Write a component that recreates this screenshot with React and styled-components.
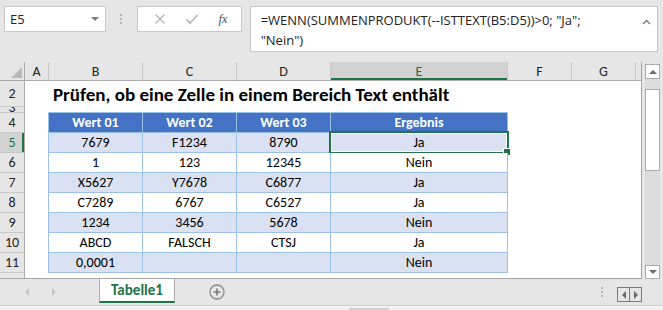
import React from 'react';
import styled, { createGlobalStyle, css } from 'styled-components';

const GREEN = '#217346';
const CELLFONT = '"Carlito", "Lato", "Liberation Sans", sans-serif';
const UIFONT = '"Segoe UI", "Open Sans", "Noto Sans", sans-serif';

const Global = createGlobalStyle`
  html, body { margin: 0; padding: 0; }
  body {
    width: 663px; height: 310px; overflow: hidden;
    background: #e6e6e6;
    font-family: ${UIFONT};
  }
  * { box-sizing: border-box; }
`;

const Window = styled.div`
  width: 663px;
  height: 310px;
  display: flex;
  flex-direction: column;
  background: #e6e6e6;
  overflow: hidden;
`;

/* ---------- formula bar ---------- */
const FormulaBar = styled.div`
  height: 62px;
  flex: none;
  display: flex;
  align-items: flex-start;
  padding: 6px 5px 0 4px;
`;

const NameBox = styled.div`
  width: 102px;
  height: 26px;
  background: #fff;
  border: 1px solid #c6c6c6;
  display: flex;
  align-items: center;
  justify-content: space-between;
  padding: 0 6px 0 5px;
  font-size: 13px;
  color: #222;
`;

const DropTri = styled.span`
  width: 0; height: 0;
  border-left: 4px solid transparent;
  border-right: 4px solid transparent;
  border-top: 4px solid #7a7a7a;
`;

const DotsCol = styled.div`
  width: 31px;
  height: 26px;
  display: flex;
  flex-direction: column;
  align-items: center;
  justify-content: center;
  gap: 2px;
`;

const Dot = styled.span`
  width: 2px; height: 2px;
  background: #b4b4b4;
`;

const FxBox = styled.div`
  width: 105px;
  height: 26px;
  background: #fff;
  border: 1px solid #c6c6c6;
  display: flex;
  align-items: center;
  justify-content: space-around;
  padding: 0 4px 0 6px;
  margin-right: 8px;
`;

const FxIcon = styled.span`
  font-family: "Liberation Serif", serif;
  font-style: italic;
  font-size: 13px;
  color: #555;
  letter-spacing: -0.5px;
`;

const FormulaBox = styled.div`
  width: 409px;
  height: 46px;
  background: #fff;
  border: 1px solid #c6c6c6;
  display: flex;
  justify-content: space-between;
  padding: 3px 6px 0 10px;
`;

const FormulaText = styled.div`
  font-size: 13px;
  line-height: 20px;
  color: #222;
  white-space: pre;
`;

/* ---------- sheet ---------- */
const SheetRow = styled.div`
  display: flex;
  height: 217px;
  flex: none;
`;

const Sheet = styled.div`
  width: 642px;
  display: flex;
  flex-direction: column;
  border-right: 1px solid #a6a6a6;
  border-bottom: 1px solid #a6a6a6;
  overflow: hidden;
`;

const ColHeadRow = styled.div`
  display: flex;
  height: 19px;
  flex: none;
  border-bottom: 1px solid #ababab;
`;

const Corner = styled.div`
  width: 25px;
  flex: none;
  position: relative;
  border-right: 1px solid #ababab;
  &::after {
    content: '';
    position: absolute;
    right: 2px; bottom: 2px;
    width: 0; height: 0;
    border-left: 11px solid transparent;
    border-bottom: 11px solid #b9b9b9;
  }
`;

const ColHead = styled.div`
  width: ${p => p.$w}px;
  flex: none;
  display: flex;
  align-items: center;
  justify-content: center;
  border-right: 1px solid #c8c8c8;
  font-family: ${CELLFONT};
  font-size: 14px;
  color: #222;
  ${p => p.$active && css`
    background: #d2d2d2;
    color: ${GREEN};
    box-shadow: inset 0 -2px 0 ${GREEN};
  `}
`;

const Body = styled.div`
  display: flex;
  flex: 1;
  min-height: 0;
`;

const RowHeads = styled.div`
  width: 25px;
  flex: none;
  display: flex;
  flex-direction: column;
  border-right: 1px solid #ababab;
`;

const RowHead = styled.div`
  height: ${p => p.$h}px;
  flex: none;
  display: flex;
  align-items: ${p => (p.$clip ? 'flex-end' : 'center')};
  justify-content: center;
  overflow: hidden;
  border-bottom: 1px solid #c8c8c8;
  font-family: ${CELLFONT};
  font-size: 14px;
  line-height: ${p => (p.$clip ? '8px' : '1')};
  color: #222;
  ${p => p.$active && css`
    background: #d2d2d2;
    color: ${GREEN};
    box-shadow: inset -2px 0 0 ${GREEN};
  `}
`;

const Canvas = styled.div`
  flex: 1;
  background: #fff;
  display: flex;
  flex-direction: column;
`;

const Title = styled.div`
  height: 26px;
  flex: none;
  display: flex;
  align-items: center;
  padding: 1px 0 0 28px;
  font-family: ${CELLFONT};
  font-weight: 700;
  font-size: 19px;
  color: #000;
  white-space: nowrap;
`;

const Gap = styled.div`
  height: ${p => p.$h}px;
  flex: none;
`;

const Table = styled.div`
  margin-left: 23px;
  display: grid;
  grid-template-columns: 94px 94px 94px 177px;
  grid-auto-rows: 20px;
  width: max-content;
  border-left: 1px solid #9bc2e6;
  border-top: 1px solid #9bc2e6;
`;

const Cell = styled.div`
  position: relative;
  display: flex;
  align-items: center;
  justify-content: center;
  border-right: 1px solid #9bc2e6;
  border-bottom: 1px solid #9bc2e6;
  font-family: ${CELLFONT};
  font-size: 14px;
  color: #000;
  background: ${p => (p.$band ? '#d9e1f2' : '#fff')};
  ${p => p.$head && css`
    background: #4472c4;
    color: #fff;
    font-weight: 700;
  `}
`;

const Selection = styled.div`
  position: absolute;
  left: -2px; top: -2px; right: -2px; bottom: -2px;
  border: 2px solid ${GREEN};
  box-shadow: inset 0 0 0 1px #fff;
  pointer-events: none;
  &::after {
    content: '';
    position: absolute;
    right: -4px; bottom: -4px;
    width: 6px; height: 6px;
    background: ${GREEN};
    border: 1px solid #fff;
  }
`;

/* ---------- vertical scrollbar ---------- */
const VScroll = styled.div`
  width: 21px;
  display: flex;
  flex-direction: column;
  padding: 2px 3px 0 3px;
`;

const ScrollBtn = styled.div`
  width: 15px;
  height: ${p => p.$h}px;
  flex: none;
  background: #fff;
  border: 1px solid #ababab;
  display: flex;
  align-items: center;
  justify-content: center;
`;

const Tri = styled.span`
  width: 0; height: 0;
  border-left: 4px solid transparent;
  border-right: 4px solid transparent;
  ${p => (p.$up
    ? css`border-bottom: 4px solid #6a6a6a;`
    : css`border-top: 4px solid #6a6a6a;`)}
`;

const Track = styled.div`
  flex: 1;
  background: #dcdcdc;
  padding-top: 10px;
`;

const Thumb = styled.div`
  height: 82px;
  background: #fff;
  border: 1px solid #ababab;
`;

/* ---------- tab bar ---------- */
const TabBar = styled.div`
  height: 26px;
  flex: none;
  display: flex;
  align-items: stretch;
`;

const TabNav = styled.div`
  width: 99px;
  display: flex;
  align-items: center;
  padding-left: 25px;
  gap: 23px;
`;

const SideTri = styled.span`
  width: 0; height: 0;
  border-top: 4px solid transparent;
  border-bottom: 4px solid transparent;
  ${p => (p.$left
    ? css`border-right: 4px solid #c4c4c4;`
    : css`border-left: 4px solid #c4c4c4;`)}
`;

const Tab = styled.div`
  width: 76px;
  height: 24px;
  background: #fff;
  border-left: 1px solid #ababab;
  border-right: 1px solid #ababab;
  border-bottom: 2px solid ${GREEN};
  display: flex;
  align-items: center;
  justify-content: center;
  font-family: ${CELLFONT};
  font-weight: 700;
  font-size: 15px;
  color: ${GREEN};
`;

const AddWrap = styled.div`
  width: 84px;
  display: flex;
  align-items: center;
  justify-content: center;
  padding-bottom: 1px;
`;

const Spacer = styled.div`
  flex: 1;
`;

const HDots = styled.div`
  display: flex;
  flex-direction: column;
  justify-content: center;
  gap: 2px;
  margin-right: 14px;
`;

const NavBox = styled.div`
  margin-top: 8px;
  height: 15px;
  width: 25px;
  display: flex;
  border: 1px solid #7a7a7a;
  margin-right: 21px;
`;

const NavHalf = styled.div`
  flex: 1;
  display: flex;
  align-items: center;
  justify-content: center;
  & + & { border-left: 1px solid #7a7a7a; }
`;

const NavTri = styled.span`
  width: 0; height: 0;
  border-top: 4px solid transparent;
  border-bottom: 4px solid transparent;
  ${p => (p.$left
    ? css`border-right: 4px solid #6a6a6a;`
    : css`border-left: 4px solid #6a6a6a;`)}
`;

const BottomStrip = styled.div`
  flex: 1;
  border-top: 1px solid #cfcfcf;
  background: #f2f2f2;
  padding: 2px 0 0 349px;
`;

const HThumb = styled.div`
  width: 40px;
  height: 100%;
  background: #d0d0d0;
`;

const cols = [
  { id: 'A', w: 24 },
  { id: 'B', w: 94 },
  { id: 'C', w: 94 },
  { id: 'D', w: 94 },
  { id: 'E', w: 177, active: true },
  { id: 'F', w: 64 },
  { id: 'G', w: 64 },
  { id: '', w: 6 },
];

const rowHeads = [
  { n: '2', h: 26 },
  { n: '3', h: 6, clip: true },
  { n: '4', h: 20 },
  { n: '5', h: 20, active: true },
  { n: '6', h: 20 },
  { n: '7', h: 20 },
  { n: '8', h: 20 },
  { n: '9', h: 20 },
  { n: '10', h: 20 },
  { n: '11', h: 20 },
  { n: '', h: 20 },
];

const data = [
  ['7679', 'F1234', '8790', 'Ja'],
  ['1', '123', '12345', 'Nein'],
  ['X5627', 'Y7678', 'C6877', 'Ja'],
  ['C7289', '6767', 'C6527', 'Ja'],
  ['1234', '3456', '5678', 'Nein'],
  ['ABCD', 'FALSCH', 'CTSJ', 'Ja'],
  ['0,0001', '', '', 'Nein'],
];

export default function App() {
  return (
    <Window>
      <Global />
      <FormulaBar>
        <NameBox>
          <span>E5</span>
          <DropTri />
        </NameBox>
        <DotsCol>
          <Dot /><Dot /><Dot />
        </DotsCol>
        <FxBox>
          <svg width="12" height="12" viewBox="0 0 12 12">
            <path d="M1.5 1.5 L10.5 10.5 M10.5 1.5 L1.5 10.5" stroke="#b4b4b4" strokeWidth="1.4" fill="none" />
          </svg>
          <svg width="14" height="12" viewBox="0 0 14 12">
            <path d="M1.5 6.5 L5 10 L12.5 2" stroke="#b4b4b4" strokeWidth="1.6" fill="none" />
          </svg>
          <FxIcon>fx</FxIcon>
        </FxBox>
        <FormulaBox>
          <FormulaText>{'=WENN(SUMMENPRODUKT(--ISTTEXT(B5:D5))>0; "Ja";\n"Nein")'}</FormulaText>
          <svg width="9" height="8" viewBox="0 0 9 8" style={{ marginTop: 8 }}>
            <path d="M1 6 L4.5 2.5 L8 6" stroke="#7a7a7a" strokeWidth="1.5" fill="none" />
          </svg>
        </FormulaBox>
      </FormulaBar>

      <SheetRow>
        <Sheet>
          <ColHeadRow>
            <Corner />
            {cols.map((c, i) => (
              <ColHead key={i} $w={c.w} $active={c.active}>{c.id}</ColHead>
            ))}
          </ColHeadRow>
          <Body>
            <RowHeads>
              {rowHeads.map((r, i) => (
                <RowHead key={i} $h={r.h} $active={r.active} $clip={r.clip}>{r.n}</RowHead>
              ))}
            </RowHeads>
            <Canvas>
              <Title>Prüfen, ob eine Zelle in einem Bereich Text enthält</Title>
              <Gap $h={5} />
              <Table>
                {['Wert 01', 'Wert 02', 'Wert 03', 'Ergebnis'].map(h => (
                  <Cell key={h} $head>{h}</Cell>
                ))}
                {data.map((row, ri) =>
                  row.map((v, ci) => (
                    <Cell key={`${ri}-${ci}`} $band={ri % 2 === 0}>
                      {v}
                      {ri === 0 && ci === 3 && <Selection />}
                    </Cell>
                  ))
                )}
              </Table>
            </Canvas>
          </Body>
        </Sheet>
        <VScroll>
          <ScrollBtn $h={15}><Tri $up /></ScrollBtn>
          <Track><Thumb /></Track>
          <ScrollBtn $h={14}><Tri /></ScrollBtn>
        </VScroll>
      </SheetRow>

      <TabBar>
        <TabNav>
          <SideTri $left />
          <SideTri />
        </TabNav>
        <Tab>Tabelle1</Tab>
        <AddWrap>
          <svg width="16" height="16" viewBox="0 0 16 16">
            <circle cx="8" cy="8" r="7" stroke="#8a8a8a" strokeWidth="1.3" fill="none" />
            <path d="M8 4.5 V11.5 M4.5 8 H11.5" stroke="#7a7a7a" strokeWidth="1.6" />
          </svg>
        </AddWrap>
        <Spacer />
        <HDots>
          <Dot /><Dot /><Dot />
        </HDots>
        <NavBox>
          <NavHalf><NavTri $left /></NavHalf>
          <NavHalf><NavTri /></NavHalf>
        </NavBox>
      </TabBar>
      <BottomStrip>
        <HThumb />
      </BottomStrip>
    </Window>
  );
}
